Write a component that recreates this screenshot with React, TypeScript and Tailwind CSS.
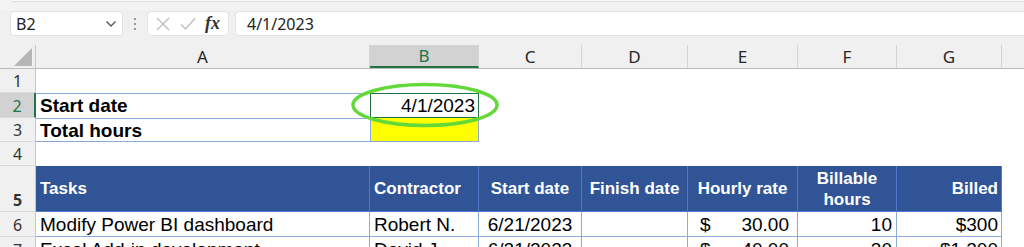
const ui = "font-['Segoe_UI','Noto_Sans',sans-serif]";

function RowHead({ n, h, active = false }: { n: number; h: string; active?: boolean }) {
  return (
    <div
      className={`${h} ${ui} flex w-[36px] shrink-0 items-end justify-center border-b border-[#d9d9d9] pb-[1px] text-[16px] leading-[20px] ${
        active ? "border-r-2 border-r-[#217346] bg-[#d2d2d2] text-[#217346]" : "border-r border-r-[#c6c6c6] bg-[#f0f0f0] text-[#333]"
      }`}
    >
      {n}
    </div>
  );
}

function ColHead({ label, w, active = false }: { label: string; w: string; active?: boolean }) {
  return (
    <div
      className={`${w} flex shrink-0 items-center justify-center border-r border-[#d4d4d4] text-[17px] ${
        active ? "border-b-2 border-b-[#217346] bg-[#d2d2d2] text-[#217346]" : "text-[#262626]"
      }`}
    >
      {label}
    </div>
  );
}

function DataRow({
  n,
  task,
  who,
  start,
  rate,
  hours,
  billed,
}: {
  n: number;
  task: string;
  who: string;
  start: string;
  rate: string;
  hours: string;
  billed: string;
}) {
  return (
    <div className="flex h-[25px] leading-[25px]">
      <RowHead n={n} h="h-[25px]" />
      <div className="w-[334px] shrink-0 border-r border-b border-[#8eaadb] pl-[4px]">{task}</div>
      <div className="w-[109px] shrink-0 border-r border-b border-[#8eaadb] pl-[4px]">{who}</div>
      <div className="w-[103px] shrink-0 border-r border-b border-[#8eaadb] text-center">{start}</div>
      <div className="w-[106px] shrink-0 border-r border-b border-[#8eaadb]" />
      <div className="flex w-[110px] shrink-0 justify-between border-r border-b border-[#8eaadb] pr-[8px] pl-[12px]">
        <span>$</span>
        <span>{rate}</span>
      </div>
      <div className="w-[99px] shrink-0 border-r border-b border-[#8eaadb] pr-[4px] text-right">{hours}</div>
      <div className="w-[105px] shrink-0 border-r border-b border-[#8eaadb] pr-[3px] text-right">{billed}</div>
    </div>
  );
}

export default function App() {
  return (
    <div className="relative h-[247px] w-[1024px] overflow-hidden bg-white font-['Liberation_Sans',Arial,sans-serif] text-[19px] text-black">
      {/* ribbon edge */}
      <div className="h-[10px] bg-[#f3f3f3] pl-[12px]">
        <div className="h-[2px] border-b border-[#dedede] bg-[#fafafa]" />
      </div>

      {/* formula bar */}
      <div className={`${ui} flex h-[35px] items-start bg-[#f0f0f0] pt-[1px] pl-[10px]`}>
        <div className="flex h-[25px] w-[113px] items-center justify-between rounded-[4px] border border-[#e3e3e3] bg-white pr-[5px] pl-[5px] text-[16px] text-[#222]">
          <span>B2</span>
          <svg width="12" height="8" viewBox="0 0 12 8" fill="none" stroke="#555" strokeWidth="1.4">
            <path d="M1.5 1.5 L6 6 L10.5 1.5" />
          </svg>
        </div>
        <div className="flex h-[25px] w-[24px] flex-col items-center justify-center gap-[3px]">
          <span className="h-[2px] w-[2px] bg-[#9a9a9a]" />
          <span className="h-[2px] w-[2px] bg-[#9a9a9a]" />
          <span className="h-[2px] w-[2px] bg-[#9a9a9a]" />
        </div>
        <div className="flex h-[25px] w-[82px] items-center rounded-[4px] border border-[#e3e3e3] bg-white pl-[8px]">
          <svg width="14" height="14" viewBox="0 0 14 14" fill="none" stroke="#bdbdbd" strokeWidth="1.3">
            <path d="M1 1 L13 13 M13 1 L1 13" />
          </svg>
          <svg className="ml-[10px]" width="16" height="14" viewBox="0 0 16 14" fill="none" stroke="#bdbdbd" strokeWidth="1.3">
            <path d="M1 7.5 L5.5 12 L15 1.5" />
          </svg>
          <span className="ml-[9px] font-['Liberation_Serif',serif] text-[18px] font-bold italic text-[#333]">fx</span>
        </div>
        <div className="ml-[6px] flex h-[25px] flex-1 items-center rounded-l-[4px] border border-r-0 border-[#e3e3e3] bg-white pl-[11px] text-[16px] text-[#222]">
          4/1/2023
        </div>
      </div>

      {/* column headers */}
      <div className={`${ui} flex h-[24px] border-b border-[#bcbcbc] bg-[#f0f0f0]`}>
        <div className="flex w-[36px] shrink-0 items-end justify-end border-r border-[#c6c6c6] pr-[3px] pb-[2px]">
          <svg width="18" height="18" viewBox="0 0 18 18">
            <polygon points="18,0 18,18 0,18" fill="#b6b6b6" />
          </svg>
        </div>
        <ColHead label="A" w="w-[334px]" />
        <ColHead label="B" w="w-[109px]" active />
        <ColHead label="C" w="w-[103px]" />
        <ColHead label="D" w="w-[106px]" />
        <ColHead label="E" w="w-[110px]" />
        <ColHead label="F" w="w-[99px]" />
        <ColHead label="G" w="w-[105px]" />
        <div className="flex-1" />
      </div>

      {/* row 1 */}
      <div className="flex h-[24px]">
        <RowHead n={1} h="h-[24px]" />
      </div>

      {/* row 2 */}
      <div className="flex h-[25px] leading-[24px]">
        <RowHead n={2} h="h-[25px]" active />
        <div className="w-[334px] shrink-0 border-t border-[#8eaadb] pl-[4px] font-bold">Start date</div>
        <div className="w-[109px] shrink-0 border border-[#217346] pr-[3px] text-right">4/1/2023</div>
      </div>

      {/* row 3 */}
      <div className="flex h-[24px] leading-[23px]">
        <RowHead n={3} h="h-[24px]" />
        <div className="w-[334px] shrink-0 border-y border-[#8eaadb] pl-[4px] font-bold">Total hours</div>
        <div className="w-[109px] shrink-0 border-x border-b border-[#8eaadb] bg-[#ffff00]" />
      </div>

      {/* row 4 */}
      <div className="flex h-[24px]">
        <RowHead n={4} h="h-[24px]" />
      </div>

      {/* row 5 – table header */}
      <div className="flex h-[46px] text-[17px] font-bold text-white">
        <RowHead n={5} h="h-[46px]" />
        <div className="flex w-[334px] shrink-0 items-center border-r border-b border-[#4f79c8] bg-[#305496] pl-[4px]">Tasks</div>
        <div className="flex w-[109px] shrink-0 items-center border-r border-b border-[#4f79c8] bg-[#305496] pl-[4px]">Contractor</div>
        <div className="flex w-[103px] shrink-0 items-center justify-center border-r border-b border-[#4f79c8] bg-[#305496]">Start date</div>
        <div className="flex w-[106px] shrink-0 items-center justify-center border-r border-b border-[#4f79c8] bg-[#305496]">Finish date</div>
        <div className="flex w-[110px] shrink-0 items-center justify-center border-r border-b border-[#4f79c8] bg-[#305496]">Hourly rate</div>
        <div className="flex w-[99px] shrink-0 flex-col items-center justify-center border-r border-b border-[#4f79c8] bg-[#305496] leading-[21px]">
          <span>Billable</span>
          <span>hours</span>
        </div>
        <div className="flex w-[105px] shrink-0 items-center justify-end border-r border-b border-[#4f79c8] bg-[#305496] pr-[3px]">Billed</div>
      </div>

      <DataRow n={6} task="Modify Power BI dashboard" who="Robert N." start="6/21/2023" rate="30.00" hours="10" billed="$300" />
      <DataRow n={7} task="Excel Add-in development" who="David J." start="6/21/2023" rate="40.00" hours="30" billed="$1,200" />

      {/* highlight ring around B2 */}
      <svg className="pointer-events-none absolute top-[82px] left-[350px]" width="150" height="46" viewBox="0 0 150 46" fill="none">
        <ellipse cx="75" cy="23" rx="72" ry="20.5" stroke="#62d939" strokeWidth="3.5" />
      </svg>
    </div>
  );
}
